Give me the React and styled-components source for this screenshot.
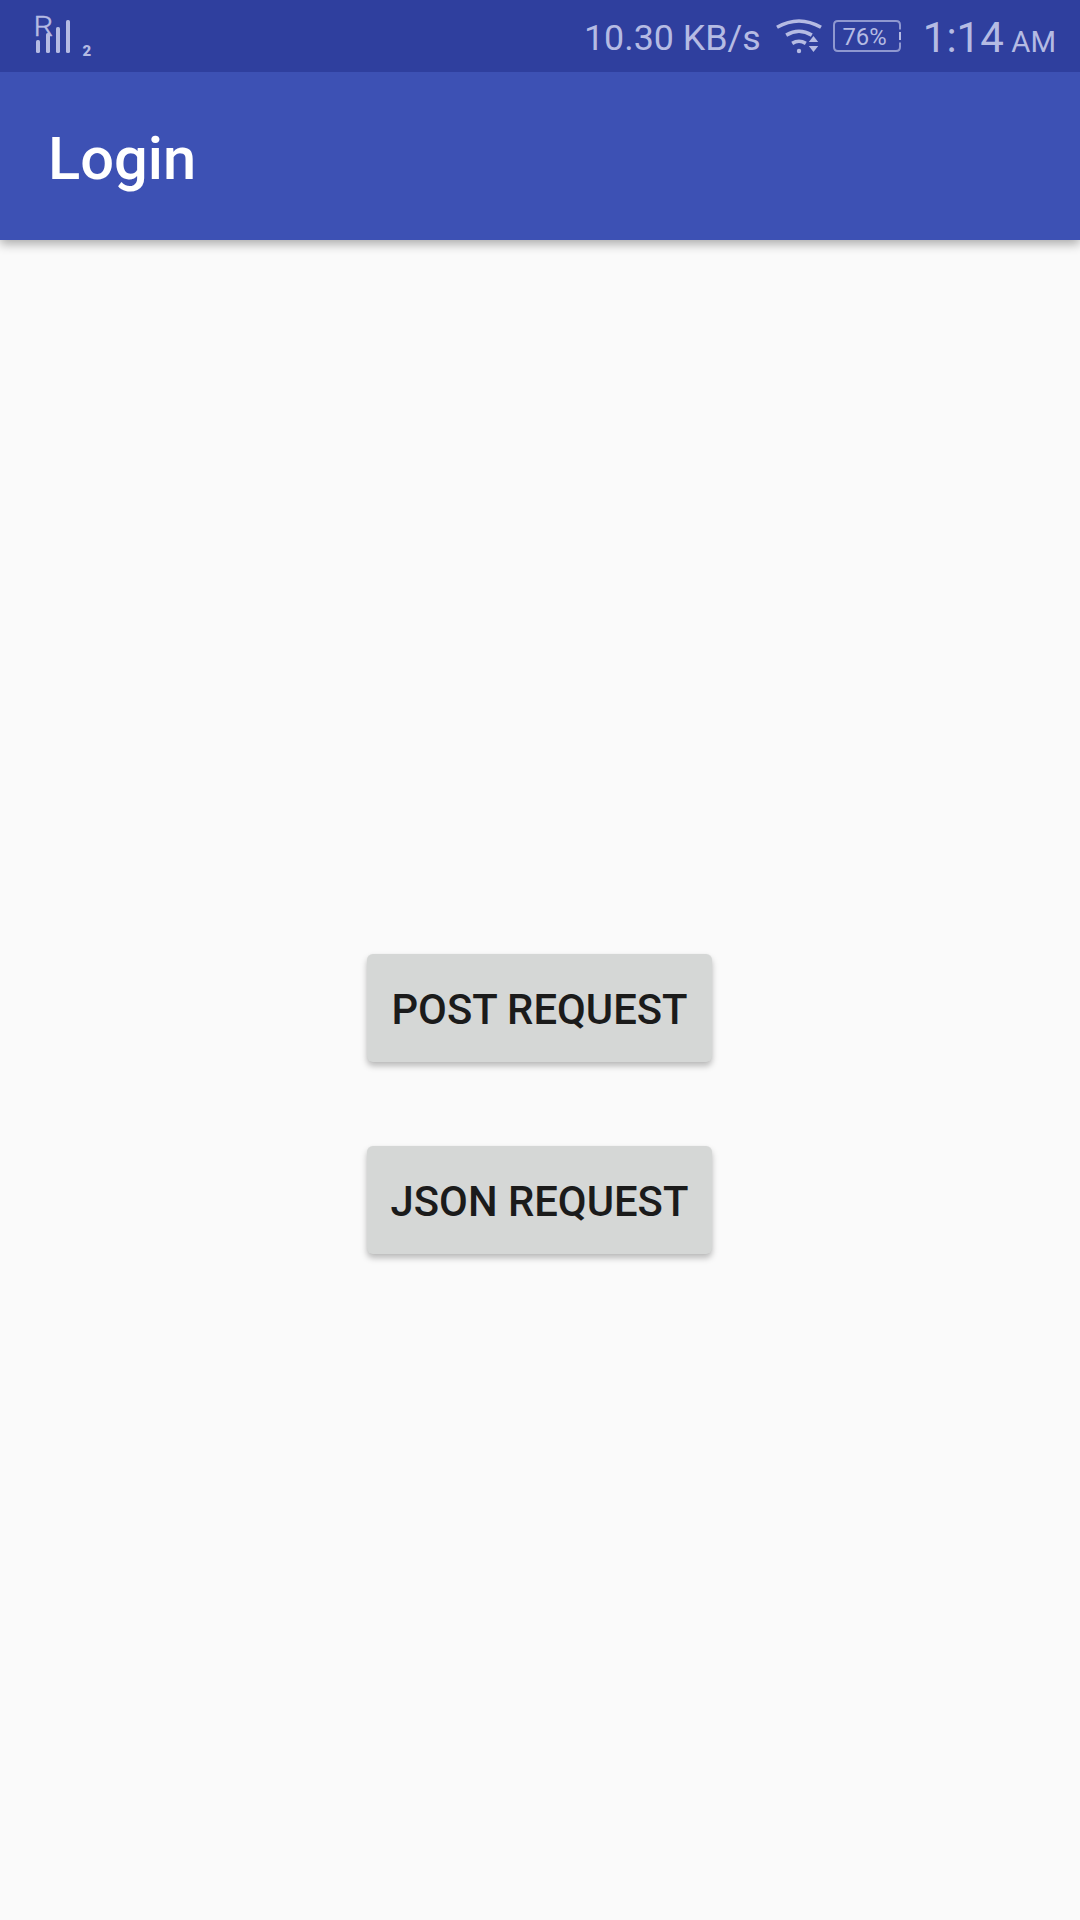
import React from "react";
import styled, { createGlobalStyle } from "styled-components";

const GlobalStyle = createGlobalStyle`
  *, *::before, *::after { box-sizing: border-box; }
  body { margin: 0; background: #fafafa; }
`;

const Screen = styled.div`
  display: flex;
  flex-direction: column;
  height: 1920px;
  width: 1080px;
  background: #fafafa;
  font-family: Roboto, "Liberation Sans", sans-serif;
  overflow: hidden;
`;

const StatusBar = styled.header`
  position: relative;
  z-index: 2;
  display: flex;
  align-items: center;
  flex: none;
  height: 72px;
  padding: 0 24px 0 34px;
  background: #2f3f9e;
  color: #b5bbe3;
`;

const StatusIcon = styled.svg`
  display: block;
  flex: none;
  margin-left: ${(p) => p.$gap || 0}px;
  font-family: Roboto, "Liberation Sans", sans-serif;
`;

const NetworkSpeed = styled.span`
  margin-left: auto;
  font-size: 35.8px;
  line-height: 42px;
  padding-top: 4px;
`;

const Clock = styled.time`
  margin-left: 21px;
  font-size: 42px;
  line-height: 50px;
  padding-top: 7px;
  white-space: nowrap;
`;

const Meridiem = styled.span`
  margin-left: 7.5px;
  font-size: 29.3px;
`;

const AppBar = styled.div`
  position: relative;
  z-index: 1;
  display: flex;
  align-items: center;
  flex: none;
  height: 168px;
  padding: 5px 48px 0;
  background: #3d51b4;
  box-shadow: 0 4px 10px rgba(0, 0, 0, 0.32);
`;

const Title = styled.h1`
  margin: 0;
  color: #fff;
  font-size: 59.6px;
  line-height: 70px;
  font-weight: 500;
`;

const Content = styled.main`
  display: flex;
  flex: 1;
  flex-direction: column;
  align-items: center;
  gap: 84px;
  padding: 714px 1px 0 0;
`;

const RequestButton = styled.button`
  display: flex;
  align-items: center;
  justify-content: center;
  width: 345px;
  height: 108px;
  padding: 4px 0 0;
  border: 0;
  border-radius: 6px;
  background: #d5d7d6;
  color: #1b1b1b;
  font: 500 41.8px/50px Roboto, "Liberation Sans", sans-serif;
  text-transform: uppercase;
  white-space: nowrap;
  box-shadow: 0 4px 6px rgba(0, 0, 0, 0.26), 0 0 2px rgba(0, 0, 0, 0.04);
`;

function SignalIcon() {
  return (
    <StatusIcon width="60" height="72" viewBox="34 0 60 72" fill="currentColor">
      <text
        transform="translate(33.6 35.8) scale(1.12 1)"
        fontSize="27.8"
        fontWeight="300"
        stroke="currentColor"
        strokeWidth="0.4"
      >
        R
      </text>
      <rect x="36" y="40" width="4" height="13" rx="1.6" />
      <rect x="46" y="33" width="4" height="20" rx="1.6" />
      <rect x="56" y="27" width="4" height="26" rx="1.6" />
      <rect x="66" y="20" width="4" height="33" rx="1.6" />
      <text x="82.4" y="56" fontSize="15" fontWeight="900">2</text>
    </StatusIcon>
  );
}

function WifiIcon() {
  return (
    <StatusIcon $gap={14} width="48" height="72" viewBox="775 0 48 72">
      <g fill="none" stroke="currentColor" strokeWidth="3.6">
        <path d="M777 27.3Q799 14.7 821 27.3" />
        <path d="M786.2 35.1Q799 27.5 811.8 35.1" />
        <path d="M792.2 43.4Q799 39.2 805.8 43.4" />
      </g>
      <g fill="currentColor">
        <circle cx="799" cy="51" r="2.2" />
        <path d="M808.8 42L813.5 36L818.2 42Z" />
        <path d="M808.8 46L813.5 52L818.2 46Z" />
      </g>
    </StatusIcon>
  );
}

function BatteryIcon() {
  return (
    <StatusIcon $gap={10} width="69" height="72" viewBox="833 0 69 72">
      <path
        d="M900 29.5V25Q900 21 896 21H838Q834 21 834 25V47Q834 51 838 51H896Q900 51 900 47V42.5"
        fill="none"
        stroke="#8f98d0"
        strokeWidth="2"
      />
      <rect x="899" y="32" width="2" height="8" fill="currentColor" />
      <text x="842.5" y="45" fontSize="23.8" fill="currentColor">76%</text>
    </StatusIcon>
  );
}

export default function App() {
  return (
    <>
      <GlobalStyle />
      <Screen>
        <StatusBar>
          <SignalIcon />
          <NetworkSpeed>10.30 KB/s</NetworkSpeed>
          <WifiIcon />
          <BatteryIcon />
          <Clock>
            1:14<Meridiem>AM</Meridiem>
          </Clock>
        </StatusBar>
        <AppBar>
          <Title>Login</Title>
        </AppBar>
        <Content>
          <RequestButton type="button">Post Request</RequestButton>
          <RequestButton type="button">JSON Request</RequestButton>
        </Content>
      </Screen>
    </>
  );
}
